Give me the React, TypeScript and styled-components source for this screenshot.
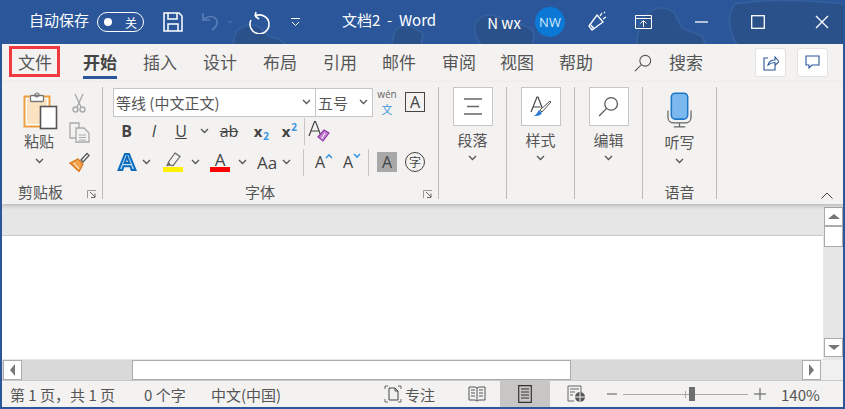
import styled, { createGlobalStyle } from "styled-components";
import React from "react";

const CJK = `"Noto Sans CJK SC", "Noto Sans", sans-serif`;
const BLUE = "#2b579a";
const INK = "#444";

const GlobalStyle = createGlobalStyle`
    html, body { margin: 0; padding: 0; background: #fff; }
    body { font-family: ${CJK}; color: ${INK}; }
    svg { display: block; }
`;

const Window = styled.div`
    width: 845px;
    height: 409px;
    box-sizing: border-box;
    border: solid ${BLUE};
    border-width: 0 2px 2px 2px;
    display: flex;
    flex-direction: column;
    overflow: hidden;
`;

const TitleBar = styled.div`
    position: relative;
    height: 44px;
    margin: 0 -2px;
    flex: none;
    background: ${BLUE};
    color: #fff;
    display: flex;
    align-items: center;
    overflow: hidden;
`;

const Blobs = styled.svg`
    position: absolute;
    left: 0;
    top: 0;
`;

const TitleItem = styled.div<{ $left: number; $width: number; $raise?: number }>`
    position: relative;
    flex: none;
    margin-left: ${p => p.$left}px;
    width: ${p => p.$width}px;
    padding-bottom: ${p => p.$raise ?? 0}px;
    display: flex;
    align-items: center;
    justify-content: center;
    font-size: 15px;
    white-space: nowrap;
`;

const Toggle = styled.div`
    width: 47px;
    height: 20px;
    box-sizing: border-box;
    border: 1px solid #fff;
    border-radius: 10px;
    display: flex;
    align-items: center;
    justify-content: space-between;
    padding: 0 6px 0 6px;
    font-size: 12px;
    &::before {
        content: "";
        width: 8px;
        height: 8px;
        border-radius: 50%;
        background: #fff;
    }
`;

const Avatar = styled.div`
    width: 30px;
    height: 30px;
    border-radius: 50%;
    background: #0a78d4;
    color: #d5ebff;
    font: 13px "Open Sans", sans-serif;
    display: flex;
    align-items: center;
    justify-content: center;
`;

const TabRow = styled.div`
    height: 38px;
    flex: none;
    background: #f3f2f1;
    display: flex;
    align-items: flex-start;
    position: relative;
`;

const Tab = styled.div<{ $left: number; $active?: boolean }>`
    flex: none;
    margin-left: ${p => p.$left}px;
    height: 35px;
    box-sizing: border-box;
    font-size: 17px;
    line-height: 36px;
    width: 34px;
    text-align: center;
    white-space: nowrap;
    font-weight: ${p => (p.$active ? 700 : 400)};
    color: ${p => (p.$active ? "#444" : "#555")};
    border-bottom: 3px solid ${p => (p.$active ? BLUE : "transparent")};
`;

const TabIcon = styled.div<{ $left: number }>`
    flex: none;
    margin-left: ${p => p.$left}px;
    height: 38px;
    display: flex;
    align-items: center;
`;

const FileMark = styled.div`
    position: absolute;
    left: 7px;
    top: 2px;
    width: 51px;
    height: 31px;
    box-sizing: border-box;
    border: 3px solid #f03a3f;
`;

const SquareBtn = styled.div<{ $left: number }>`
    flex: none;
    margin-left: ${p => p.$left}px;
    margin-top: 4px;
    width: 31px;
    height: 29px;
    box-sizing: border-box;
    background: #fff;
    border: 1px solid #e4e2e0;
    border-radius: 3px;
    display: flex;
    align-items: center;
    justify-content: center;
`;

const Ribbon = styled.div`
    height: 122px;
    flex: none;
    background: #f3f2f1;
    display: flex;
    position: relative;
    padding-top: 5px;
    box-sizing: border-box;
    box-shadow: 0 2px 4px rgba(0, 0, 0, 0.2);
    z-index: 1;
`;

const Group = styled.div<{ $width: number }>`
    flex: none;
    width: ${p => p.$width}px;
    height: 112px;
    box-sizing: border-box;
    border-right: 1px solid #bdbbb9;
    position: relative;
    display: flex;
    flex-direction: column;
`;

const GroupBody = styled.div`
    flex: 1;
    display: flex;
    min-height: 0;
`;

const GroupLabel = styled.div<{ $shift?: number }>`
    height: 20px;
    font-size: 15px;
    line-height: 26px;
    text-align: center;
    color: #555;
    flex: none;
    padding-right: ${p => p.$shift ?? 0}px;
`;

const Launcher = styled.svg`
    position: absolute;
    right: 5px;
    bottom: 0;
`;

const PasteCol = styled.div`
    width: 72px;
    padding: 5px 0 0 2px;
    box-sizing: border-box;
    display: flex;
    flex-direction: column;
    align-items: center;
`;

const PasteArt = styled.div`
    margin-left: 4px;
`;

const BigLabel = styled.div<{ $top?: number }>`
    font-size: 15px;
    line-height: 20px;
    margin-top: ${p => p.$top ?? 0}px;
    color: #555;
`;

const ChevronSlot = styled.div<{ $top: number }>`
    margin-top: ${p => p.$top}px;
`;

const SmallCol = styled.div`
    width: 24px;
    margin-left: -7px;
    padding-top: 6px;
    display: flex;
    flex-direction: column;
    align-items: center;
    gap: 9px;
`;

const FontBody = styled.div`
    padding-left: 10px;
    display: flex;
    flex-direction: column;
    flex: 1;
`;

const ToolRow = styled.div<{ $top?: number }>`
    display: flex;
    align-items: center;
    height: 30px;
    margin-top: ${p => p.$top ?? 0}px;
`;

const SelectBox = styled.div<{ $width: number }>`
    width: ${p => p.$width}px;
    height: 29px;
    box-sizing: border-box;
    background: #fff;
    border: 1px solid #c8c6c4;
    display: flex;
    align-items: center;
    justify-content: space-between;
    padding: 0 4px 0 2px;
    font-size: 15px;
    color: #555;
    & + & { margin-left: -1px; }
`;

const Cell = styled.div<{ $width: number; $left?: number }>`
    flex: none;
    width: ${p => p.$width}px;
    margin-left: ${p => p.$left ?? 0}px;
    height: 24px;
    display: flex;
    align-items: center;
    justify-content: center;
    position: relative;
    color: #444;
`;

const VSep = styled.div<{ $left: number }>`
    flex: none;
    width: 1px;
    height: 27px;
    margin-left: ${p => p.$left}px;
    background: #c8c6c4;
`;

const Glyph = styled.span<{ $size?: number; $bold?: boolean; $italic?: boolean; $under?: boolean; $strike?: boolean; $raise?: number }>`
    font-family: "Open Sans", sans-serif;
    font-size: ${p => p.$size ?? 16}px;
    font-weight: ${p => (p.$bold ? 700 : 400)};
    font-style: ${p => (p.$italic ? "italic" : "normal")};
    color: #444;
    text-decoration: ${p => (p.$under ? "underline" : p.$strike ? "line-through" : "none")};
    line-height: 1;
    margin-bottom: ${p => p.$raise ?? 0}px;
`;

const Sup = styled.span<{ $low?: boolean }>`
    font: 700 10px "Open Sans", sans-serif;
    color: #3a96dd;
    position: absolute;
    right: 3px;
    ${p => (p.$low ? "bottom: 0;" : "top: 1px;")}
`;

const ColorBar = styled.span<{ $color: string }>`
    position: absolute;
    bottom: 2px;
    left: 2px;
    right: 2px;
    height: 5px;
    background: ${p => p.$color};
`;

const Wen = styled.div`
    display: flex;
    flex-direction: column;
    align-items: center;
    font: 10px/15px "Open Sans", sans-serif;
    color: #666;
    & b { font: 400 11px/15px ${CJK}; color: #3a96dd; }
`;

const BoxedA = styled.div`
    width: 20px;
    height: 20px;
    box-sizing: border-box;
    border: 1.5px solid #444;
    display: flex;
    align-items: center;
    justify-content: center;
    font: 16px "Open Sans", sans-serif;
`;

const ShadedA = styled(BoxedA)`
    border: none;
    background: #a8a8a8;
    color: #444;
`;

const Circled = styled.div`
    width: 20px;
    height: 20px;
    box-sizing: border-box;
    border: 1.3px solid #444;
    border-radius: 50%;
    font-size: 12px;
    line-height: 17px;
    text-align: center;
`;

const StackCol = styled.div`
    flex: 1;
    display: flex;
    flex-direction: column;
    align-items: center;
`;

const IconBox = styled.div`
    width: 40px;
    height: 39px;
    box-sizing: border-box;
    background: #fff;
    border: 1px solid #c8c6c4;
    display: flex;
    align-items: center;
    justify-content: center;
`;

const MicSlot = styled.div`
    margin-top: 5px;
`;

const Caret = styled.svg`
    margin-top: -12px;
`;

const Collapse = styled.svg`
    position: absolute;
    right: 10px;
    bottom: 5px;
`;

const Workspace = styled.div`
    flex: 1;
    display: flex;
    min-height: 0;
`;

const DocColumn = styled.div`
    flex: 1;
    display: flex;
    flex-direction: column;
`;

const RulerBand = styled.div`
    height: 32px;
    flex: none;
    background: #e6e6e6;
    border-bottom: 1px solid #c8c8c8;
    box-sizing: border-box;
`;

const Page = styled.div`
    flex: 1;
    background: #fff;
`;

const VScroll = styled.div`
    width: 20px;
    flex: none;
    box-sizing: border-box;
    padding: 3px 0 2px 1px;
    background: #e6e6e6;
    display: flex;
    flex-direction: column;
`;

const ScrollBtn = styled.div<{ $w: number; $h: number }>`
    width: ${p => p.$w}px;
    height: ${p => p.$h}px;
    flex: none;
    box-sizing: border-box;
    background: #fff;
    border: 1px solid #ababab;
    display: flex;
    align-items: center;
    justify-content: center;
`;

const Arrow = styled.div<{ $dir: "up" | "down" | "left" | "right" }>`
    width: 0;
    height: 0;
    border: 5px solid transparent;
    ${p => {
        const side = { up: "bottom", down: "top", left: "right", right: "left" }[p.$dir];
        const axis = p.$dir === "up" || p.$dir === "down"
            ? `border-left-width: 6px; border-right-width: 6px; border-${p.$dir === "up" ? "top" : "bottom"}-width: 0;`
            : `border-top-width: 6px; border-bottom-width: 6px; border-${p.$dir === "left" ? "left" : "right"}-width: 0;`;
        return `border-${side}-color: #777; ${axis}`;
    }}
`;

const Spacer = styled.div`
    flex: 1;
`;

const HScroll = styled.div`
    height: 22px;
    flex: none;
    box-sizing: border-box;
    background: #f0f0f0;
    border-top: 1px solid #e6e6e6;
    border-bottom: 1px solid #c8c8c8;
    display: flex;
    padding-right: 22px;
`;

const HTrack = styled.div`
    flex: 1;
    background: #d9d9d9;
    display: flex;
    align-items: center;
    padding-left: 1px;
`;

const HThumb = styled.div`
    width: 439px;
    height: 20px;
    margin-left: 110px;
    box-sizing: border-box;
    background: #fff;
    border: 1px solid #ababab;
`;

const StatusBar = styled.div`
    height: 26px;
    flex: none;
    background: #f3f2f1;
    display: flex;
    align-items: center;
    font-size: 15px;
    color: #555;
`;

const StatusText = styled.div<{ $left?: number; $width: number }>`
    flex: none;
    margin-left: ${p => p.$left ?? 0}px;
    width: ${p => p.$width}px;
    white-space: nowrap;
`;

const StatusIcon = styled.div<{ $left: number; $width: number; $active?: boolean }>`
    flex: none;
    margin-left: ${p => p.$left}px;
    width: ${p => p.$width}px;
    height: 26px;
    background: ${p => (p.$active ? "#c8c6c4" : "transparent")};
    display: flex;
    align-items: center;
    justify-content: center;
`;

const Slider = styled.div`
    flex: none;
    margin-left: 6px;
    width: 125px;
    height: 1px;
    background: #a8a8a8;
    position: relative;
`;

const SliderTick = styled.div`
    position: absolute;
    left: 62px;
    top: -3px;
    width: 1px;
    height: 7px;
    background: #a8a8a8;
`;

const SliderKnob = styled.div`
    position: absolute;
    left: 66px;
    top: -7px;
    width: 6px;
    height: 14px;
    background: #6e6e6e;
`;

const Chevron: React.FC<{ color?: string }> = ({ color = "#555" }) => (
    <svg width="9" height="6" viewBox="0 0 9 6">
        <path d="M1 1l3.5 3.5L8 1" fill="none" stroke={color} strokeWidth="1.3" />
    </svg>
);

const LauncherIcon = () => (
    <Launcher width="10" height="9" viewBox="0 0 10 9">
        <path d="M.5 8V.5H9" fill="none" stroke="#999" />
        <path d="M3 2l5 5M8 3.5V7.5H4" fill="none" stroke="#666" />
    </Launcher>
);

const PasteIcon = () => (
    <svg width="36" height="38" viewBox="0 0 36 38">
        <rect x="1.5" y="4.5" width="25" height="30" fill="#fff" stroke="#ed9e3f" strokeWidth="2" />
        <rect x="4" y="7" width="20" height="25" fill="#fbe3c2" />
        <rect x="7.5" y="3.5" width="13" height="6" rx="1" fill="#fff" stroke="#777" strokeWidth="1.3" />
        <circle cx="14" cy="3" r="2" fill="none" stroke="#777" strokeWidth="1.2" />
        <rect x="17.5" y="14.5" width="16" height="22" fill="#fff" stroke="#555" strokeWidth="1.6" />
    </svg>
);

const ScissorsIcon = () => (
    <svg width="14" height="20" viewBox="0 0 14 20">
        <g fill="none" stroke="#a9a9a9" strokeWidth="1.4">
            <path d="M3 1l6 13M11 1L5 14" />
            <circle cx="3.5" cy="16.5" r="2.5" />
            <circle cx="10.5" cy="16.5" r="2.5" />
        </g>
    </svg>
);

const CopyIcon = () => (
    <svg width="21" height="21" viewBox="0 0 21 21">
        <g fill="#f3f2f1" stroke="#a9a9a9" strokeWidth="1.3">
            <path d="M1 1h9v15H1z" />
            <path d="M7 6h8l5 5v9H7z" />
        </g>
        <path d="M10 13h7M10 15.5h7M10 18h7" stroke="#a9a9a9" />
    </svg>
);

const BrushIcon = () => (
    <svg width="21" height="20" viewBox="0 0 21 20">
        <path d="M12 8l6-6.5 2 2L14 10z" fill="#fff" stroke="#555" strokeWidth="1.3" />
        <path d="M1 11l8-4 5 5-4 7.500z" fill="#f2a24a" stroke="#d9731a" strokeWidth="1.2" />
        <path d="M5 11l5 6" stroke="#fff" />
    </svg>
);

const BlueA = () => (
    <svg width="20" height="18" viewBox="0 0 20 19">
        <path d="M1 18L8 1h4l7 17h-4l-1.300-4H6.300L5 18z M7.500 10.500h5L10 4z" fill="#bfe0f7" stroke="#0f6cbd" strokeWidth="2.200" />
    </svg>
);

const HighlighterIcon = () => (
    <svg width="20" height="20" viewBox="0 0 20 20">
        <path d="M12 1l5 3.500-7 9-3.500-.5-1-3z" fill="#f3f2f1" stroke="#666" strokeWidth="1.200" />
        <path d="M5 10l3 3-5 1.500z" fill="#666" />
        <rect x="0" y="15" width="20" height="5" fill="#ffef00" />
    </svg>
);

const EraserA = () => (
    <svg width="22" height="22" viewBox="0 0 22 22">
        <path d="M1 16L6.500 1.500h1L13 16M3 11h8.500" fill="none" stroke="#444" strokeWidth="1.200" />
        <path d="M10 17l6-7 5 3-6 8z" fill="#c27fcf" stroke="#8f3aa3" strokeWidth="1.200" />
        <path d="M13.500 19l3.500-6" stroke="#fff" />
    </svg>
);

const ResizeA: React.FC<{ up?: boolean; left?: number }> = ({ up, left }) => (
    <Cell $width={28} $left={left}>
        <Glyph $size={16}>A</Glyph>
        <Caret width="8" height="6" viewBox="0 0 8 6">
            <path d={up ? "M1 5l3-3 3 3" : "M1 1l3 3 3-3"} fill="none" stroke="#3a96dd" strokeWidth="1.600" />
        </Caret>
    </Cell>
);

const ParagraphIcon = () => (
    <svg width="18" height="17" viewBox="0 0 18 17">
        <path d="M0 1h18M3 8.500h12M0 16h18" stroke="#666" strokeWidth="1.400" />
    </svg>
);

const StylesIcon = () => (
    <svg width="22" height="24" viewBox="0 0 22 24">
        <path d="M1 17L7 2h1l5 13M3.500 12h7" fill="none" stroke="#444" strokeWidth="1.200" />
        <path d="M20 6l1 1-9 10-2-2z" fill="#fff" stroke="#555" />
        <path d="M9 15l3 3c-2 3-5 3-8 3 2-1 3-3 5-6z" fill="#2b7cd3" />
    </svg>
);

const SearchIcon: React.FC<{ size?: number }> = ({ size = 20 }) => (
    <svg width={size} height={size} viewBox="0 0 20 20">
        <circle cx="12.500" cy="7.500" r="6" fill="none" stroke="#555" strokeWidth="1.200" />
        <path d="M8 12L1 19" stroke="#555" strokeWidth="1.200" />
    </svg>
);

const MicIcon = () => (
    <svg width="25" height="36" viewBox="0 0 26 37">
        <rect x="4.500" y="1" width="17" height="27" rx="4" fill="#7ab8ee" stroke="#1f77c8" strokeWidth="1.600" />
        <path d="M1 19v7c0 4 3 6 6 6h12c3 0 6-2 6-6v-7M13 32v4M7 36h12" fill="none" stroke="#666" strokeWidth="1.300" />
    </svg>
);

const stars = [
    "M238 30c8-8 22-6 26 2 5 8 18 4 20 12 1 6-8 10-14 14-12 4-28 2-34-6-3-8-4-16 2-22z",
    "M395 30c10-9 20-3 28 4l-2 14h-30z",
    "M478 20c10-10 20-4 30 2 10 4 24 2 26 12l-2 12h-50c-8-10-10-20-4-26z",
    "M640 22c10-14 22-18 34-10l8 16 20 8 4 10h-70z",
    "M735 4c30-6 70-4 110 0v44H740c-12-14-14-34-5-44z",
];

const TitleBlobs = () => (
    <Blobs width="845" height="44" viewBox="0 0 845 44">
        {stars.map((d, i) => (
            <path key={i} d={d} fill="#2a5189" stroke="#335f9f" strokeWidth="2" />
        ))}
    </Blobs>
);

const tabs = [
    { label: "开始", left: 31, active: true },
    { label: "插入", left: 26 },
    { label: "设计", left: 26 },
    { label: "布局", left: 26 },
    { label: "引用", left: 26 },
    { label: "邮件", left: 25 },
    { label: "审阅", left: 26 },
    { label: "视图", left: 24 },
    { label: "帮助", left: 25 },
];

const bigGroups = [
    { label: "段落", icon: <ParagraphIcon /> },
    { label: "样式", icon: <StylesIcon /> },
    { label: "编辑", icon: <SearchIcon size={21} /> },
];

export default function App() {
    return (
        <>
            <GlobalStyle />
            <Window>
                <TitleBar>
                    <TitleBlobs />
                    <TitleItem $left={29} $width={60} $raise={5}>自动保存</TitleItem>
                    <TitleItem $left={8} $width={47}><Toggle>关</Toggle></TitleItem>
                    <TitleItem $left={19} $width={20}>
                        <svg width="20" height="20" viewBox="0 0 20 20">
                            <path d="M1 1h15l3 3v15H1zM5 1v6h9V1M5 19v-7h10v7" fill="none" stroke="#fff" strokeWidth="1.500" />
                        </svg>
                    </TitleItem>
                    <TitleItem $left={17} $width={20}>
                        <svg width="20" height="20" viewBox="0 0 20 20">
                            <path d="M3 1v7h7M3 8c4-4 10-5 13-1 3 4 0 8-4 11" fill="none" stroke="#5b7fb6" strokeWidth="1.600" />
                        </svg>
                    </TitleItem>
                    <TitleItem $left={7} $width={6}><Chevron color="#5b7fb6" /></TitleItem>
                    <TitleItem $left={15} $width={22}>
                        <svg width="22" height="23" viewBox="0 0 22 23">
                            <path d="M7 5c6-3 14 1 14 8a9.500 9.500 0 1 1-18-4M7 5l1-4M7 5l4 3" fill="none" stroke="#fff" strokeWidth="1.600" />
                        </svg>
                    </TitleItem>
                    <TitleItem $left={21} $width={9}>
                        <svg width="9" height="9" viewBox="0 0 9 9">
                            <path d="M0 .5h9M1 4l3.500 3.500L8 4" fill="none" stroke="#fff" />
                        </svg>
                    </TitleItem>
                    <TitleItem $left={38} $width={102} $raise={5}>文档2&nbsp;&nbsp;-&nbsp;&nbsp;Word</TitleItem>
                    <TitleItem $left={46} $width={36}>N wx</TitleItem>
                    <TitleItem $left={13} $width={30}><Avatar>NW</Avatar></TitleItem>
                    <TitleItem $left={23} $width={20}>
                        <svg width="20" height="22" viewBox="0 0 20 22">
                            <path d="M1 15L9 4l6 7-11 8zM3 14l3 4M12 5l2-3M15 8l3-2M16 2l1-1" fill="none" stroke="#fff" strokeWidth="1.300" />
                        </svg>
                    </TitleItem>
                    <TitleItem $left={27} $width={17}>
                        <svg width="17" height="14" viewBox="0 0 17 14">
                            <path d="M.5.500h16v13H.5zM.5 3.500h16M8.500 12V6M5.500 8.500l3-3 3 3" fill="none" stroke="#fff" />
                        </svg>
                    </TitleItem>
                    <TitleItem $left={43} $width={13}>
                        <svg width="13" height="2" viewBox="0 0 13 2"><path d="M0 1h13" stroke="#fff" strokeWidth="1.300" /></svg>
                    </TitleItem>
                    <TitleItem $left={43} $width={14}>
                        <svg width="14" height="14" viewBox="0 0 14 14"><rect x=".7" y=".7" width="12.600" height="12.600" fill="none" stroke="#fff" strokeWidth="1.300" /></svg>
                    </TitleItem>
                    <TitleItem $left={50} $width={14}>
                        <svg width="14" height="14" viewBox="0 0 14 14"><path d="M1 1l12 12M13 1L1 13" stroke="#fff" strokeWidth="1.300" /></svg>
                    </TitleItem>
                </TitleBar>

                <TabRow>
                    <FileMark />
                    <Tab $left={16}>文件</Tab>
                    {tabs.map(t => (
                        <Tab key={t.label} $left={t.left} $active={t.active}>{t.label}</Tab>
                    ))}
                    <TabIcon $left={41}><SearchIcon size={18} /></TabIcon>
                    <Tab $left={17}>搜索</Tab>
                    <SquareBtn $left={52}>
                        <svg width="16" height="16" viewBox="0 0 16 16">
                            <path d="M5 3H1v12h11v-4M5 10c1-4 4-5 7-5V2l4 4.500-4 4V7.500c-3 0-5 1-7 2.500z" fill="none" stroke={BLUE} strokeWidth="1.100" />
                        </svg>
                    </SquareBtn>
                    <SquareBtn $left={11}>
                        <svg width="15" height="15" viewBox="0 0 15 15">
                            <path d="M1 1h13v9H7l-3 3v-3H1z" fill="none" stroke={BLUE} strokeWidth="1.100" />
                        </svg>
                    </SquareBtn>
                </TabRow>

                <Ribbon>
                    <Group $width={101}>
                        <GroupBody>
                            <PasteCol>
                                <PasteArt><PasteIcon /></PasteArt>
                                <BigLabel $top={1}>粘贴</BigLabel>
                                <ChevronSlot $top={7}><Chevron /></ChevronSlot>
                            </PasteCol>
                            <SmallCol>
                                <ScissorsIcon />
                                <CopyIcon />
                                <BrushIcon />
                            </SmallCol>
                        </GroupBody>
                        <GroupLabel $shift={23}>剪贴板</GroupLabel>
                        <LauncherIcon />
                    </Group>

                    <Group $width={336}>
                        <GroupBody>
                            <FontBody>
                                <ToolRow>
                                    <SelectBox $width={203}>等线 (中文正文)<Chevron /></SelectBox>
                                    <SelectBox $width={58}>五号<Chevron /></SelectBox>
                                    <Cell $width={26} $left={1}><Wen>wén<b>文</b></Wen></Cell>
                                    <Cell $width={20} $left={5}><BoxedA>A</BoxedA></Cell>
                                </ToolRow>
                                <ToolRow $top={-1}>
                                    <Cell $width={27}><Glyph $bold>B</Glyph></Cell>
                                    <Cell $width={28}><Glyph $italic>I</Glyph></Cell>
                                    <Cell $width={26}><Glyph $under>U</Glyph></Cell>
                                    <Cell $width={20}><Chevron /></Cell>
                                    <Cell $width={30}><Glyph $strike>ab</Glyph></Cell>
                                    <Cell $width={28}><Glyph $bold $size={15}>x</Glyph><Sup $low>2</Sup></Cell>
                                    <Cell $width={28}><Glyph $bold $size={15}>x</Glyph><Sup>2</Sup></Cell>
                                    <VSep $left={4} />
                                    <Cell $width={28}><EraserA /></Cell>
                                </ToolRow>
                                <ToolRow $top={1}>
                                    <Cell $width={27}><BlueA /></Cell>
                                    <Cell $width={13}><Chevron /></Cell>
                                    <Cell $width={24} $left={8}><HighlighterIcon /></Cell>
                                    <Cell $width={10} $left={5}><Chevron /></Cell>
                                    <Cell $width={24} $left={8}><Glyph $size={17} $raise={5}>A</Glyph><ColorBar $color="#f00" /></Cell>
                                    <Cell $width={10} $left={5}><Chevron /></Cell>
                                    <Cell $width={30} $left={5}><Glyph $size={17}>Aa</Glyph></Cell>
                                    <Cell $width={9}><Chevron /></Cell>
                                    <VSep $left={12} />
                                    <ResizeA up left={6} />
                                    <ResizeA />
                                    <VSep $left={2} />
                                    <Cell $width={20} $left={8}><ShadedA>A</ShadedA></Cell>
                                    <Cell $width={20} $left={8}><Circled>字</Circled></Cell>
                                </ToolRow>
                            </FontBody>
                        </GroupBody>
                        <GroupLabel $shift={21}>字体</GroupLabel>
                        <LauncherIcon />
                    </Group>

                    {bigGroups.map(g => (
                        <Group key={g.label} $width={68}>
                            <StackCol>
                                <IconBox>{g.icon}</IconBox>
                                <BigLabel $top={4}>{g.label}</BigLabel>
                                <ChevronSlot $top={5}><Chevron /></ChevronSlot>
                            </StackCol>
                        </Group>
                    ))}
                    <Group $width={74}>
                        <StackCol>
                            <MicSlot><MicIcon /></MicSlot>
                            <BigLabel $top={4}>听写</BigLabel>
                            <ChevronSlot $top={6}><Chevron /></ChevronSlot>
                        </StackCol>
                        <GroupLabel>语音</GroupLabel>
                    </Group>
                    <Collapse width="12" height="7" viewBox="0 0 12 7">
                        <path d="M.5 6.500L6 1l5.500 5.500" fill="none" stroke="#444" />
                    </Collapse>
                </Ribbon>

                <Workspace>
                    <DocColumn>
                        <RulerBand />
                        <Page />
                    </DocColumn>
                    <VScroll>
                        <ScrollBtn $w={19} $h={19}><Arrow $dir="up" /></ScrollBtn>
                        <ScrollBtn $w={19} $h={21} />
                        <Spacer />
                        <ScrollBtn $w={19} $h={19}><Arrow $dir="down" /></ScrollBtn>
                    </VScroll>
                </Workspace>

                <HScroll>
                    <HTrack>
                        <ScrollBtn $w={19} $h={20}><Arrow $dir="left" /></ScrollBtn>
                        <HThumb />
                        <Spacer />
                        <ScrollBtn $w={19} $h={20}><Arrow $dir="right" /></ScrollBtn>
                    </HTrack>
                </HScroll>

                <StatusBar>
                    <StatusText $left={8} $width={134}>第 1 页，共 1 页</StatusText>
                    <StatusText $width={67}>0 个字</StatusText>
                    <StatusText $width={172}>中文(中国)</StatusText>
                    <StatusIcon $left={0} $width={20}>
                        <svg width="18" height="18" viewBox="0 0 18 18">
                            <path d="M1 4V1h3M14 1h3v3M17 14v3h-3M4 17H1v-3" fill="none" stroke="#666" />
                            <path d="M5 3h6l3 3v9H5zM11 3v3h3" fill="none" stroke="#444" />
                        </svg>
                    </StatusIcon>
                    <StatusText $left={2} $width={61}>专注</StatusText>
                    <StatusIcon $left={0} $width={22}>
                        <svg width="18" height="16" viewBox="0 0 18 16">
                            <path d="M1 1h6l2 1 2-1h6v13h-6l-2 1-2-1H1zM9 2v12M3 4h4M3 7h4M3 10h4M11 4h4M11 7h4M11 10h4" fill="none" stroke="#555" />
                        </svg>
                    </StatusIcon>
                    <StatusIcon $left={12} $width={50} $active>
                        <svg width="14" height="18" viewBox="0 0 14 18">
                            <path d="M.7.700h12.600v16.600H.7zM3 4h8M3 7h8M3 10h8M3 13h8" fill="none" stroke="#333" strokeWidth="1.200" />
                        </svg>
                    </StatusIcon>
                    <StatusIcon $left={16} $width={20}>
                        <svg width="19" height="18" viewBox="0 0 19 18">
                            <path d="M1 1h13v6M1 1v15h6M3 4h9M3 7h5M3 10h3" fill="none" stroke="#666" />
                            <circle cx="13" cy="12" r="5" fill="#555" />
                            <path d="M8 12h10M13 7v10" stroke="#f3f2f1" />
                        </svg>
                    </StatusIcon>
                    <StatusIcon $left={21} $width={10}>
                        <svg width="10" height="2" viewBox="0 0 10 2"><path d="M0 1h10" stroke="#555" /></svg>
                    </StatusIcon>
                    <Slider><SliderTick /><SliderKnob /></Slider>
                    <StatusIcon $left={6} $width={12}>
                        <svg width="12" height="12" viewBox="0 0 12 12"><path d="M0 6h12M6 0v12" stroke="#555" /></svg>
                    </StatusIcon>
                    <StatusText $left={15} $width={45}>140%</StatusText>
                </StatusBar>
            </Window>
        </>
    );
}
